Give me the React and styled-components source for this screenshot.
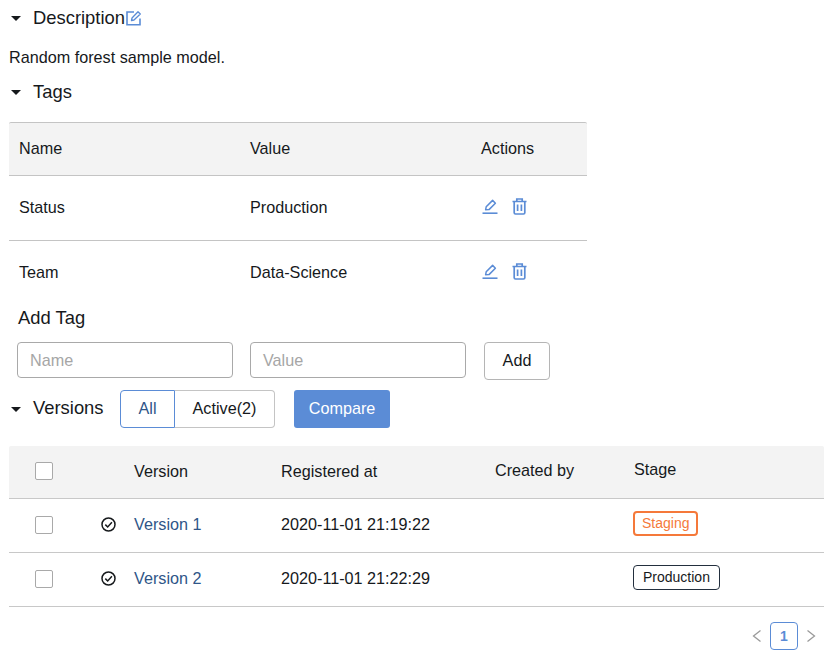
import React from 'react'
import styled, { createGlobalStyle } from 'styled-components'

const GlobalStyle = createGlobalStyle`
  html, body { margin: 0; padding: 0; background: #fff; }
  body { font-family: "Liberation Sans", Arial, sans-serif; color: #16191c; font-size: 16.2px; }
`

const Page = styled.div`
  width: 840px;
  height: 662px;
  overflow: hidden;
  box-sizing: border-box;
  padding: 6px 0 0 9px;
`
const SectionHead = styled.div`
  display: flex;
  align-items: center;
  height: 24px;
  font-size: 18.4px;
`
const Caret = styled.span`
  width: 0;
  height: 0;
  margin: 0 12px 0 2px;
  border-left: 5px solid transparent;
  border-right: 5px solid transparent;
  border-top: 5px solid #16191c;
`
const DescText = styled.p`
  margin: 15px 0 11px;
  height: 24px;
  line-height: 24px;
`
const TagTable = styled.div`
  width: 578px;
  margin-top: 18px;
`
const TagRow = styled.div`
  display: grid;
  grid-template-columns: 231px 231px 116px;
  align-items: center;
  height: ${({ $h }) => $h}px;
  padding-bottom: 2px;
  background: ${({ $head }) => ($head ? '#f3f3f3' : '#fff')};
  border-top: ${({ $head }) => ($head ? '1px solid #c4c4c4' : 'none')};
  border-bottom: ${({ $noLine }) => ($noLine ? 'none' : '1px solid #c4c4c4')};
  box-sizing: border-box;
  border-radius: ${({ $head }) => ($head ? '2px 2px 0 0' : '0')};
`
const TagCell = styled.div`
  padding-left: 10px;
`
const IconLink = styled.span`
  display: inline-flex;
  align-items: center;
  gap: 14px;
  margin: 2px 0 0 1px;
  color: #5b8cd6;
`
const AddTitle = styled.div`
  margin: 1px 0 0 9px;
  height: 24px;
  line-height: 24px;
  font-size: 18.4px;
`
const AddForm = styled.div`
  display: flex;
  align-items: flex-start;
  gap: 17px;
  margin: 12px 0 0 8px;
`
const TextBox = styled.div`
  width: 216px;
  height: 36px;
  box-sizing: border-box;
  padding-left: 12px;
  border: 1px solid #a9a9a9;
  border-radius: 4px;
  color: #a6a6a6;
  line-height: 34px;
`
const OutlineBtn = styled.div`
  width: 66px;
  height: 38px;
  box-sizing: border-box;
  margin-left: 1px;
  border: 1px solid #b5b5b5;
  border-radius: 4px;
  line-height: 34px;
  text-align: center;
`
const VersionsHead = styled.div`
  display: flex;
  align-items: center;
  height: 38px;
  margin-top: 10px;
  font-size: 18.4px;
`
const VersionsLabel = styled.span`
  width: 87px;
  margin-bottom: 2px;
`
const Segment = styled.div`
  display: flex;
  height: 38px;
  font-size: 16.2px;
`
const SegmentItem = styled.div`
  box-sizing: border-box;
  width: ${({ $w }) => $w}px;
  line-height: 34px;
  text-align: center;
  border: 1px solid ${({ $on }) => ($on ? '#5b8cd6' : '#c4c4c4')};
  border-left-width: ${({ $on }) => ($on ? '1px' : '0')};
  border-radius: ${({ $on }) => ($on ? '4px 0 0 4px' : '0 4px 4px 0')};
  color: ${({ $on }) => ($on ? '#2f5688' : '#16191c')};
`
const CompareBtn = styled.div`
  width: 96px;
  height: 38px;
  margin-left: 19px;
  border-radius: 3px;
  background: #5b8cd6;
  color: #fff;
  font-size: 16.2px;
  line-height: 36px;
  text-align: center;
`
const VersionTable = styled.div`
  width: 815px;
  margin-top: 18px;
`
const VersionRow = styled.div`
  display: grid;
  grid-template-columns: 26px 66px 33px 147px 214px 139px 190px;
  align-items: center;
  height: ${({ $h }) => $h}px;
  padding-bottom: 2px;
  box-sizing: border-box;
  background: ${({ $head }) => ($head ? '#f3f3f3' : '#fff')};
  border-bottom: 1px solid #c8c8c8;
  border-radius: ${({ $head }) => ($head ? '2px 2px 0 0' : '0')};
`
const Check = styled.span`
  display: block;
  width: 18px;
  height: 18px;
  box-sizing: border-box;
  grid-column: 2;
  border: 1px solid #a9a9a9;
  border-radius: 2px;
  background: #fff;
`
const Link = styled.a`
  color: #2f5688;
`
const LiftedCell = styled.span`
  margin-bottom: ${({ $lift }) => $lift}px;
`
const StageTag = styled.span`
  display: inline-block;
  box-sizing: border-box;
  height: 25px;
  margin-left: -1px;
  padding: 0 ${({ $pad }) => $pad}px;
  border: ${({ $border }) => $border}px solid ${({ $color }) => $color};
  border-radius: 4px;
  color: ${({ $text }) => $text};
  font-size: 14px;
  line-height: ${({ $border }) => 25 - 2 * $border}px;
`
const Pager = styled.div`
  display: flex;
  align-items: center;
  justify-content: flex-end;
  width: 815px;
  height: 28px;
  margin-top: 15px;
  padding-right: 8px;
  box-sizing: border-box;
  gap: 8px;
  color: #9a9a9a;
`
const PageNum = styled.span`
  width: 28px;
  height: 28px;
  box-sizing: border-box;
  border: 1px solid #5b8cd6;
  border-radius: 4px;
  color: #5b8cd6;
  font-weight: 700;
  font-size: 14px;
  line-height: 26px;
  text-align: center;
`
const EditSquare = styled.svg`
  margin-left: 1px;
  color: #5b8cd6;
`

const PencilIcon = () => (
  <svg width="16" height="16" viewBox="0 0 16 16" fill="none" stroke="currentColor" strokeWidth="1.5">
    <path d="M3.600 11.800 4.200 8.800 10.600 2.400l2.800 2.800-6.400 6.400z" strokeLinejoin="round" />
    <path d="M0.500 15.200h15" strokeWidth="1.600" />
  </svg>
)
const TrashIcon = () => (
  <svg width="15" height="17" viewBox="0 0 15 17" fill="none" stroke="currentColor" strokeWidth="1.7">
    <path d="M0.500 3.500h14M4.800 3.500V1h5.400v2.500M2.200 3.500v11.200q0 1.300 1.300 1.300h8q1.300 0 1.300-1.300V3.500M5.600 6.500v6.500M9.400 6.500v6.500" />
  </svg>
)
const CheckCircle = () => (
  <svg width="15" height="15" viewBox="0 0 15 15" fill="none" stroke="#16191c" strokeWidth="1.5">
    <circle cx="7.500" cy="7.500" r="6.500" />
    <path d="M4.300 7.600 6.700 10 10.900 5.300" />
  </svg>
)
const Chevron = ({ flip }) => (
  <svg width="10" height="14" viewBox="0 0 10 14" fill="none" stroke="currentColor" strokeWidth="1.3">
    <path d={flip ? 'M1.500 1.500 8.500 7l-7 5.500' : 'M8.500 1.500 1.500 7l7 5.500'} />
  </svg>
)

const tags = [
  { name: 'Status', value: 'Production', h: 65 },
  { name: 'Team', value: 'Data-Science', h: 64 },
]

const versions = [
  { name: 'Version 1', at: '2020-11-01 21:19:22', stage: 'Staging', color: '#f5793a', text: '#f5793a', border: 2, pad: 7 },
  { name: 'Version 2', at: '2020-11-01 21:22:29', stage: 'Production', color: '#232f3e', text: '#16191c', border: 1, pad: 9 },
]

function App() {
  return (
    <Page>
      <GlobalStyle />
      <SectionHead>
        <Caret />
        Description
        <EditSquare width="16" height="16" viewBox="0 0 16 16" fill="none" stroke="currentColor" strokeWidth="1.600">
          <path d="M14 8.500v6.300H1V2h7" />
          <path d="M5.500 10.500 6 8l6-6.300 2.300 2.300-6.300 6z" strokeWidth="1.300" strokeLinejoin="round" />
        </EditSquare>
      </SectionHead>
      <DescText>Random forest sample model.</DescText>
      <SectionHead>
        <Caret />
        Tags
      </SectionHead>
      <TagTable>
        <TagRow $head $h={54}>
          <TagCell>Name</TagCell>
          <TagCell>Value</TagCell>
          <TagCell>Actions</TagCell>
        </TagRow>
        {tags.map((t, i) => (
          <TagRow key={t.name} $h={t.h} $noLine={i === tags.length - 1}>
            <TagCell>{t.name}</TagCell>
            <TagCell>{t.value}</TagCell>
            <TagCell>
              <IconLink>
                <PencilIcon />
                <TrashIcon />
              </IconLink>
            </TagCell>
          </TagRow>
        ))}
      </TagTable>
      <AddTitle>Add Tag</AddTitle>
      <AddForm>
        <TextBox>Name</TextBox>
        <TextBox>Value</TextBox>
        <OutlineBtn>Add</OutlineBtn>
      </AddForm>
      <VersionsHead>
        <Caret />
        <VersionsLabel>Versions</VersionsLabel>
        <Segment>
          <SegmentItem $on $w={55}>All</SegmentItem>
          <SegmentItem $w={100}>Active(2)</SegmentItem>
        </Segment>
        <CompareBtn>Compare</CompareBtn>
      </VersionsHead>
      <VersionTable>
        <VersionRow $head $h={53}>
          <Check />
          <span />
          <span>Version</span>
          <span>Registered at</span>
          <LiftedCell $lift={2}>Created by</LiftedCell>
          <LiftedCell $lift={4}>Stage</LiftedCell>
        </VersionRow>
        {versions.map(v => (
          <VersionRow key={v.name} $h={54}>
            <Check />
            <CheckCircle />
            <Link>{v.name}</Link>
            <span>{v.at}</span>
            <span />
            <LiftedCell $lift={3}>
              <StageTag $color={v.color} $text={v.text} $border={v.border} $pad={v.pad}>{v.stage}</StageTag>
            </LiftedCell>
          </VersionRow>
        ))}
      </VersionTable>
      <Pager>
        <Chevron />
        <PageNum>1</PageNum>
        <Chevron flip />
      </Pager>
    </Page>
  )
}

export default App
